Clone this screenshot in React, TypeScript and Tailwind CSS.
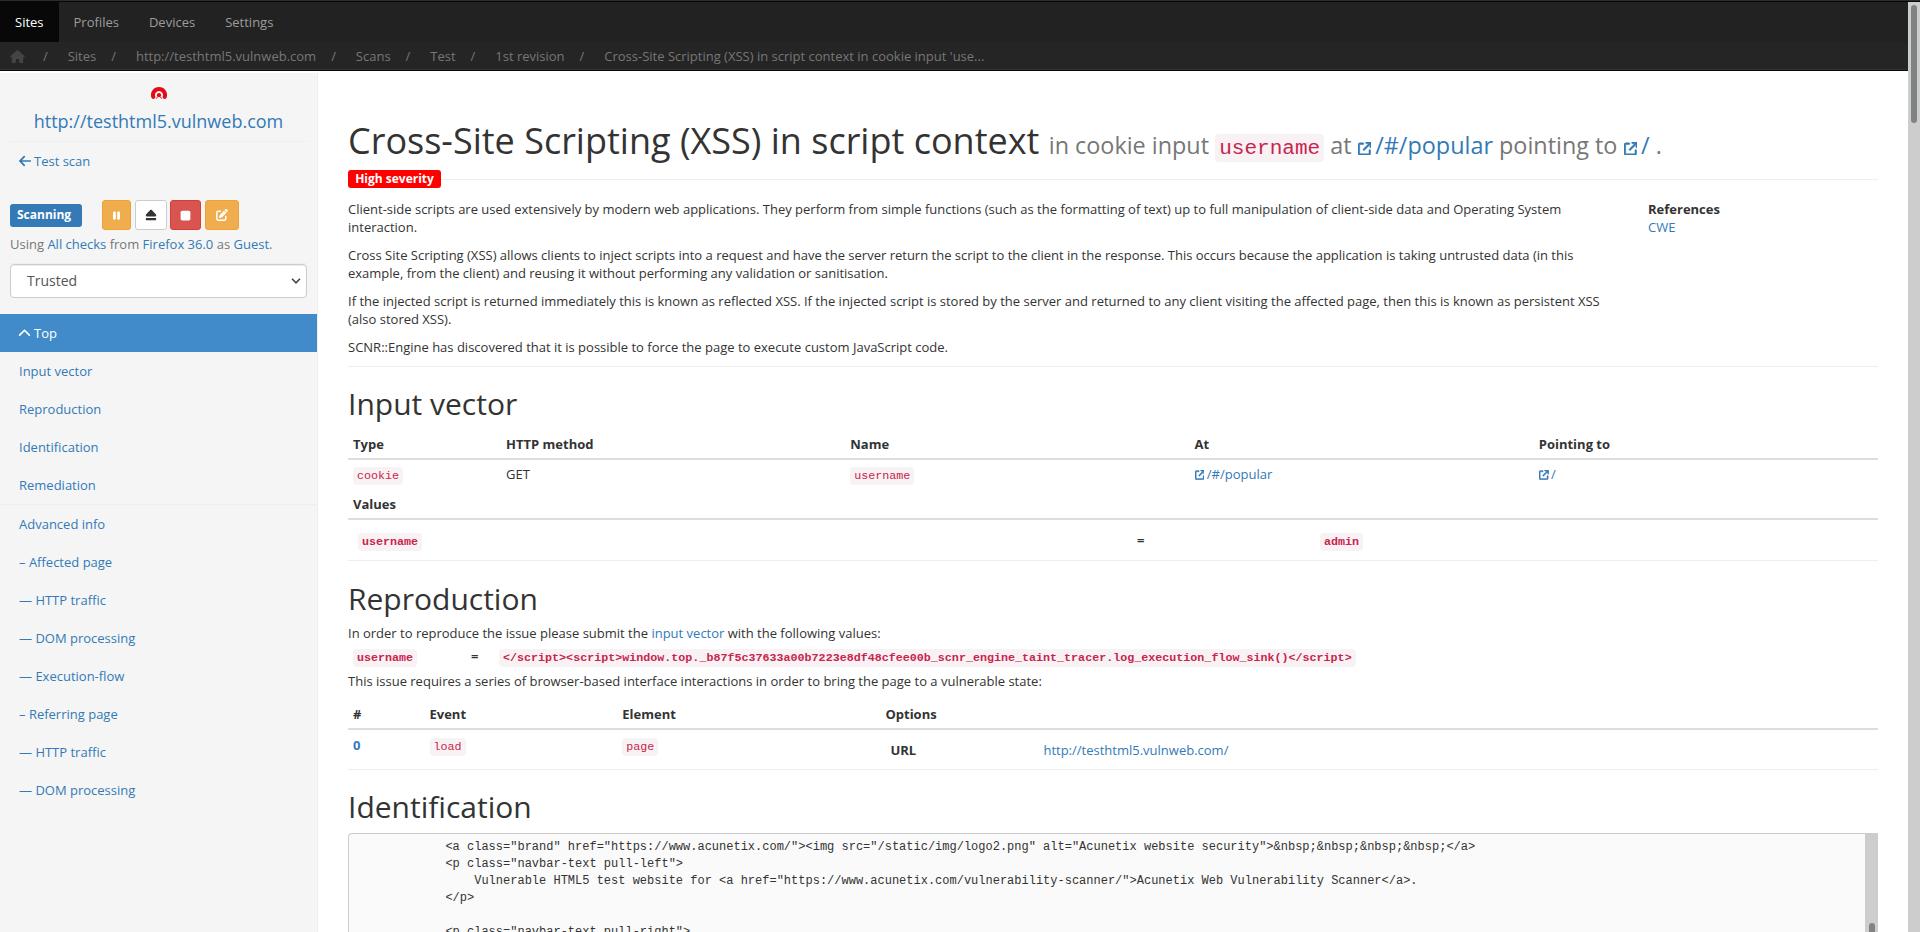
import type { ReactNode } from "react";
import {
  FaArrowLeft,
  FaArrowUpRightFromSquare,
  FaChevronUp,
  FaEject,
  FaHouse,
  FaPause,
  FaPenToSquare,
  FaStop,
} from "react-icons/fa6";

const crumbs = [
  "Sites",
  "http://testhtml5.vulnweb.com",
  "Scans",
  "Test",
  "1st revision",
  "Cross-Site Scripting (XSS) in script context in cookie input 'use...",
];

const issueSections = ["Input vector", "Reproduction", "Identification", "Remediation"];

const advancedSections = [
  "Advanced info",
  "– Affected page",
  "— HTTP traffic",
  "— DOM processing",
  "— Execution-flow",
  "– Referring page",
  "— HTTP traffic",
  "— DOM processing",
];

const source = `            <a class="brand" href="https://www.acunetix.com/"><img src="/static/img/logo2.png" alt="Acunetix website security">&nbsp;&nbsp;&nbsp;&nbsp;</a>
            <p class="navbar-text pull-left">
                Vulnerable HTML5 test website for <a href="https://www.acunetix.com/vulnerability-scanner/">Acunetix Web Vulnerability Scanner</a>.
            </p>

            <p class="navbar-text pull-right">`;

function Code({ children }: { children: ReactNode }) {
  return (
    <code className="rounded-[4px] bg-[#f9f2f4] px-1 py-0.5 font-['Liberation_Mono',monospace] text-[90%] text-[#c7254e]">
      {children}
    </code>
  );
}

function Link({ children }: { children: ReactNode }) {
  return <a className="text-[#337ab7]">{children}</a>;
}

function External({ children }: { children: ReactNode }) {
  return (
    <a className="text-[#337ab7]">
      <FaArrowUpRightFromSquare
        strokeWidth={20}
        className="inline-block size-[calc(5.3px+0.35em)] align-[-0.06em]"
      />
      <span className="ml-[calc(0.5px+0.15em)]">{children}</span>
    </a>
  );
}

function TopNav() {
  return (
    <header className="shrink-0">
      <nav className="flex h-10 bg-[#222] leading-[18px] text-[#9d9d9d]">
        <a className="bg-[#080808] px-[15px] py-[11px] text-white">Sites</a>
        <a className="px-[15px] py-[11px]">Profiles</a>
        <a className="px-[15px] py-[11px]">Devices</a>
        <a className="px-[15px] py-[11px]">Settings</a>
      </nav>
      <ol className="flex h-[27px] items-center bg-[#252525] pt-px pl-[10px] text-[#777]">
        <li className="w-[18px]">
          <FaHouse className="h-[13px] w-[15px] text-[#444]" />
        </li>
        {crumbs.map((crumb) => (
          <li key={crumb} className="flex">
            <span className="w-[39.7px] pl-[15px]">/</span>
            {crumb}
          </li>
        ))}
      </ol>
      <div className="h-px bg-[#333]" />
      <div className="h-px bg-[#080808]" />
    </header>
  );
}

function Sidebar() {
  return (
    <aside className="mt-0.5 flex w-[318px] shrink-0 flex-col border-r border-[#eee] bg-[#f5f5f5]">
      <div className="mx-[10px] flex h-[69px] flex-col items-center border-b border-[#eee]">
        <svg viewBox="0 0 16 12" className="mt-[14px] h-3 w-4">
          <path
            d="M2.3 9.9 A6 6 0 1 1 13.7 9.9"
            fill="none"
            stroke="#e30b17"
            strokeWidth="4"
            strokeLinecap="round"
          />
          <circle cx="8" cy="8.2" r="2.1" fill="#e30b17" />
          <path d="M5.4 11.6 L6.6 9.8 M10.6 11.6 L9.4 9.8" stroke="#e30b17" strokeWidth="1" />
        </svg>
        <a className="mt-[10px] text-[18px] leading-6 text-[#337ab7]">
          http://testhtml5.vulnweb.com
        </a>
      </div>
      <a className="mt-[10px] ml-[19px] flex h-[18px] items-center leading-[18px] text-[#337ab7]">
        <FaArrowLeft className="mr-[3.2px] -ml-[0.4px] h-[14px] w-[12.2px]" />
        Test scan
      </a>
      <div className="mt-[30px] flex h-[30px] items-center pl-[10px]">
        <span className="mr-5 h-[23px] w-[72px] rounded-[3px] bg-[#337ab7] pl-[7px] text-[12px] leading-[22px] font-bold text-white">
          Scanning
        </span>
        <div className="flex">
          <button className="mr-1 flex h-[30px] w-[29px] items-center justify-center rounded-[3px] border border-[#eea236] bg-[#f0ad4e] text-white">
            <FaPause className="size-[11px]" />
          </button>
          <button className="mr-[3px] flex h-[30px] w-8 items-center justify-center rounded-[3px] border border-[#ccc] bg-white text-[#333]">
            <FaEject className="size-3" />
          </button>
          <button className="mr-1 flex h-[30px] w-[31px] items-center justify-center rounded-[3px] border border-[#d43f3a] bg-[#d9534f] text-white">
            <FaStop className="size-[13px]" />
          </button>
          <button className="flex h-[30px] w-[34px] items-center justify-center rounded-[3px] border border-[#eea236] bg-[#f0ad4e] text-white">
            <FaPenToSquare className="size-3" />
          </button>
        </div>
      </div>
      <p className="mt-[5px] ml-[10px] leading-[18px] text-[#777]">
        Using <Link>All checks</Link> from <Link>Firefox 36.0</Link> as <Link>Guest</Link>.
      </p>
      <div className="mx-[10px] mt-[10px] border-t border-[#eee]">
        <div className="flex h-[34px] items-center justify-between rounded-[4px] border border-[#ccc] bg-white pr-[5px] pl-4 text-[14px] text-[#555] shadow-[inset_0_1px_1px_rgba(0,0,0,0.075)]">
          Trusted
          <svg viewBox="0 0 10 6" className="h-[6px] w-[10px]">
            <path d="M1 0.8 L5 4.8 L9 0.8" fill="none" stroke="#444" strokeWidth="1.6" />
          </svg>
        </div>
      </div>
      <nav className="mt-4 leading-[18px] text-[#337ab7]">
        <a className="flex h-[38px] items-center bg-[#428bca] pl-[19px] text-white">
          <FaChevronUp className="mr-[2.8px] -ml-[0.8px] size-[13px]" />
          Top
        </a>
        {issueSections.map((label) => (
          <a key={label} className="block h-[38px] py-[10px] pl-[19px]">
            {label}
          </a>
        ))}
        <div className="border-t border-[#eee]">
          {advancedSections.map((label, i) => (
            <a key={i} className="block h-[38px] py-[10px] pl-[19px]">
              {label}
            </a>
          ))}
        </div>
      </nav>
    </aside>
  );
}

function Summary() {
  return (
    <section className="h-[296px] border-b border-[#eee]">
      <h1 className="mt-[52px] h-9 text-[36px] leading-9 whitespace-nowrap">
        Cross-Site Scripting (XSS) in script context{" "}
        <small className="text-[65%] leading-none text-[#777]">
          in cookie input <Code>username</Code> at <External>/#/popular</External> pointing to{" "}
          <External>/</External> .
        </small>
      </h1>
      <div className="mt-[11px] flex h-[18px] items-center">
        <span className="h-[18px] w-[93px] rounded-[3px] bg-[#f00] text-center text-[12px] leading-[17px] font-bold text-white">
          High severity
        </span>
        <div className="mt-px h-px flex-1 bg-[#eee]" />
      </div>
      <div className="mt-3 flex gap-[30px]">
        <div className="flex w-[1270px] flex-col gap-[10px]">
          <p>
            Client-side scripts are used extensively by modern web applications. They perform from
            simple functions (such as the formatting of text) up to full manipulation of client-side
            data and Operating System interaction.
          </p>
          <p>
            Cross Site Scripting (XSS) allows clients to inject scripts into a request and have the
            server return the script to the client in the response. This occurs because the
            application is taking untrusted data (in this example, from the client) and reusing it
            without performing any validation or sanitisation.
          </p>
          <p>
            If the injected script is returned immediately this is known as reflected XSS. If the
            injected script is stored by the server and returned to any client visiting the affected
            page, then this is known as persistent XSS (also stored XSS).
          </p>
          <p>
            SCNR::Engine has discovered that it is possible to force the page to execute custom
            JavaScript code.
          </p>
        </div>
        <div>
          <div className="font-bold">References</div>
          <Link>CWE</Link>
        </div>
      </div>
    </section>
  );
}

function InputVector() {
  return (
    <section className="h-[194px] border-b border-[#eee] pt-[22px]">
      <h2 className="text-[30px] leading-[30px]">Input vector</h2>
      <div className="mt-[11px] grid h-[30px] grid-cols-[10%_22.5%_22.5%_22.5%_22.5%] border-b-2 border-[#ddd] pt-[5px] font-bold *:pl-[5px]">
        <span>Type</span>
        <span>HTTP method</span>
        <span>Name</span>
        <span>At</span>
        <span>Pointing to</span>
      </div>
      <div className="grid h-[30px] grid-cols-[10%_22.5%_22.5%_22.5%_22.5%] pt-[5px] *:pl-[5px]">
        <span>
          <Code>cookie</Code>
        </span>
        <span>GET</span>
        <span>
          <Code>username</Code>
        </span>
        <span>
          <External>/#/popular</External>
        </span>
        <span>
          <External>/</External>
        </span>
      </div>
      <div className="h-[30px] border-b-2 border-[#ddd] pt-[5px] pl-[5px] font-bold">Values</div>
      <div className="flex pt-[11px] pl-[10px] font-bold">
        <span className="w-[779px]">
          <Code>username</Code>
        </span>
        <span className="w-[183px]">=</span>
        <span>
          <Code>admin</Code>
        </span>
      </div>
    </section>
  );
}

function Reproduction() {
  return (
    <section className="h-[209px] border-b border-[#eee] pt-[23px]">
      <h2 className="text-[30px] leading-[30px]">Reproduction</h2>
      <p className="mt-[10px]">
        In order to reproduce the issue please submit the <Link>input vector</Link> with the
        following values:
      </p>
      <div className="mt-[5px] flex h-[18px] pl-[5px] font-bold">
        <span className="w-[118px]">
          <Code>username</Code>
        </span>
        <span className="w-7">=</span>
        <span>
          <Code>
            {
              "</script><script>window.top._b87f5c37633a00b7223e8df48cfee00b_scnr_engine_taint_tracer.log_execution_flow_sink()</script>"
            }
          </Code>
        </span>
      </div>
      <p className="mt-[7px]">
        This issue requires a series of browser-based interface interactions in order to bring the
        page to a vulnerable state:
      </p>
      <div className="mt-[10px] grid h-[30px] grid-cols-[5%_12.6%_17.2%_1fr] border-b-2 border-[#ddd] pt-[5px] font-bold *:pl-[5px]">
        <span>#</span>
        <span>Event</span>
        <span>Element</span>
        <span>Options</span>
      </div>
      <div className="grid grid-cols-[5%_12.6%_17.2%_1fr] pt-[6px] *:pl-[5px]">
        <span className="font-bold text-[#337ab7]">0</span>
        <span>
          <Code>load</Code>
        </span>
        <span>
          <Code>page</Code>
        </span>
        <div className="flex pt-[5px]">
          <span className="w-[158px] pl-[5px] font-bold">URL</span>
          <Link>http://testhtml5.vulnweb.com/</Link>
        </div>
      </div>
    </section>
  );
}

function Identification() {
  return (
    <section className="flex min-h-0 flex-1 flex-col pt-[22px]">
      <h2 className="text-[30px] leading-[30px]">Identification</h2>
      <div className="mt-[11px] flex min-h-0 flex-1">
        <pre className="min-w-0 flex-1 overflow-hidden rounded-tl-[4px] border-t border-l border-[#ccc] bg-[#fafafa] pt-[5px] pl-[10px] font-['Liberation_Mono',monospace] text-[12px] leading-[17px]">
          {source}
        </pre>
        <div className="flex w-[13px] flex-col items-center overflow-hidden bg-[#cdcdcd] pt-[90px]">
          <div className="h-[60px] w-1.5 shrink-0 rounded-full bg-[#7f8383]" />
        </div>
      </div>
    </section>
  );
}

export default function App() {
  return (
    <div className="flex h-[932px] w-[1920px] flex-col overflow-hidden bg-white font-['Open_Sans',sans-serif] text-[13px] leading-[18px] text-[#333]">
      <div className="h-px shrink-0 bg-[#2b2b35]" />
      <div className="h-px shrink-0 bg-[#080808]" />
      <div className="flex min-h-0 flex-1">
        <div className="flex min-w-0 flex-1 flex-col">
          <TopNav />
          <div className="flex min-h-0 flex-1">
            <Sidebar />
            <main className="ml-[30px] flex w-[1530px] flex-col">
              <Summary />
              <InputVector />
              <Reproduction />
              <Identification />
            </main>
          </div>
        </div>
        <div className="flex w-3 flex-col items-center bg-[#cdcdcd] pt-[3px]">
          <div className="h-[118px] w-1.5 rounded-full bg-[#7f8383]" />
        </div>
      </div>
    </div>
  );
}
